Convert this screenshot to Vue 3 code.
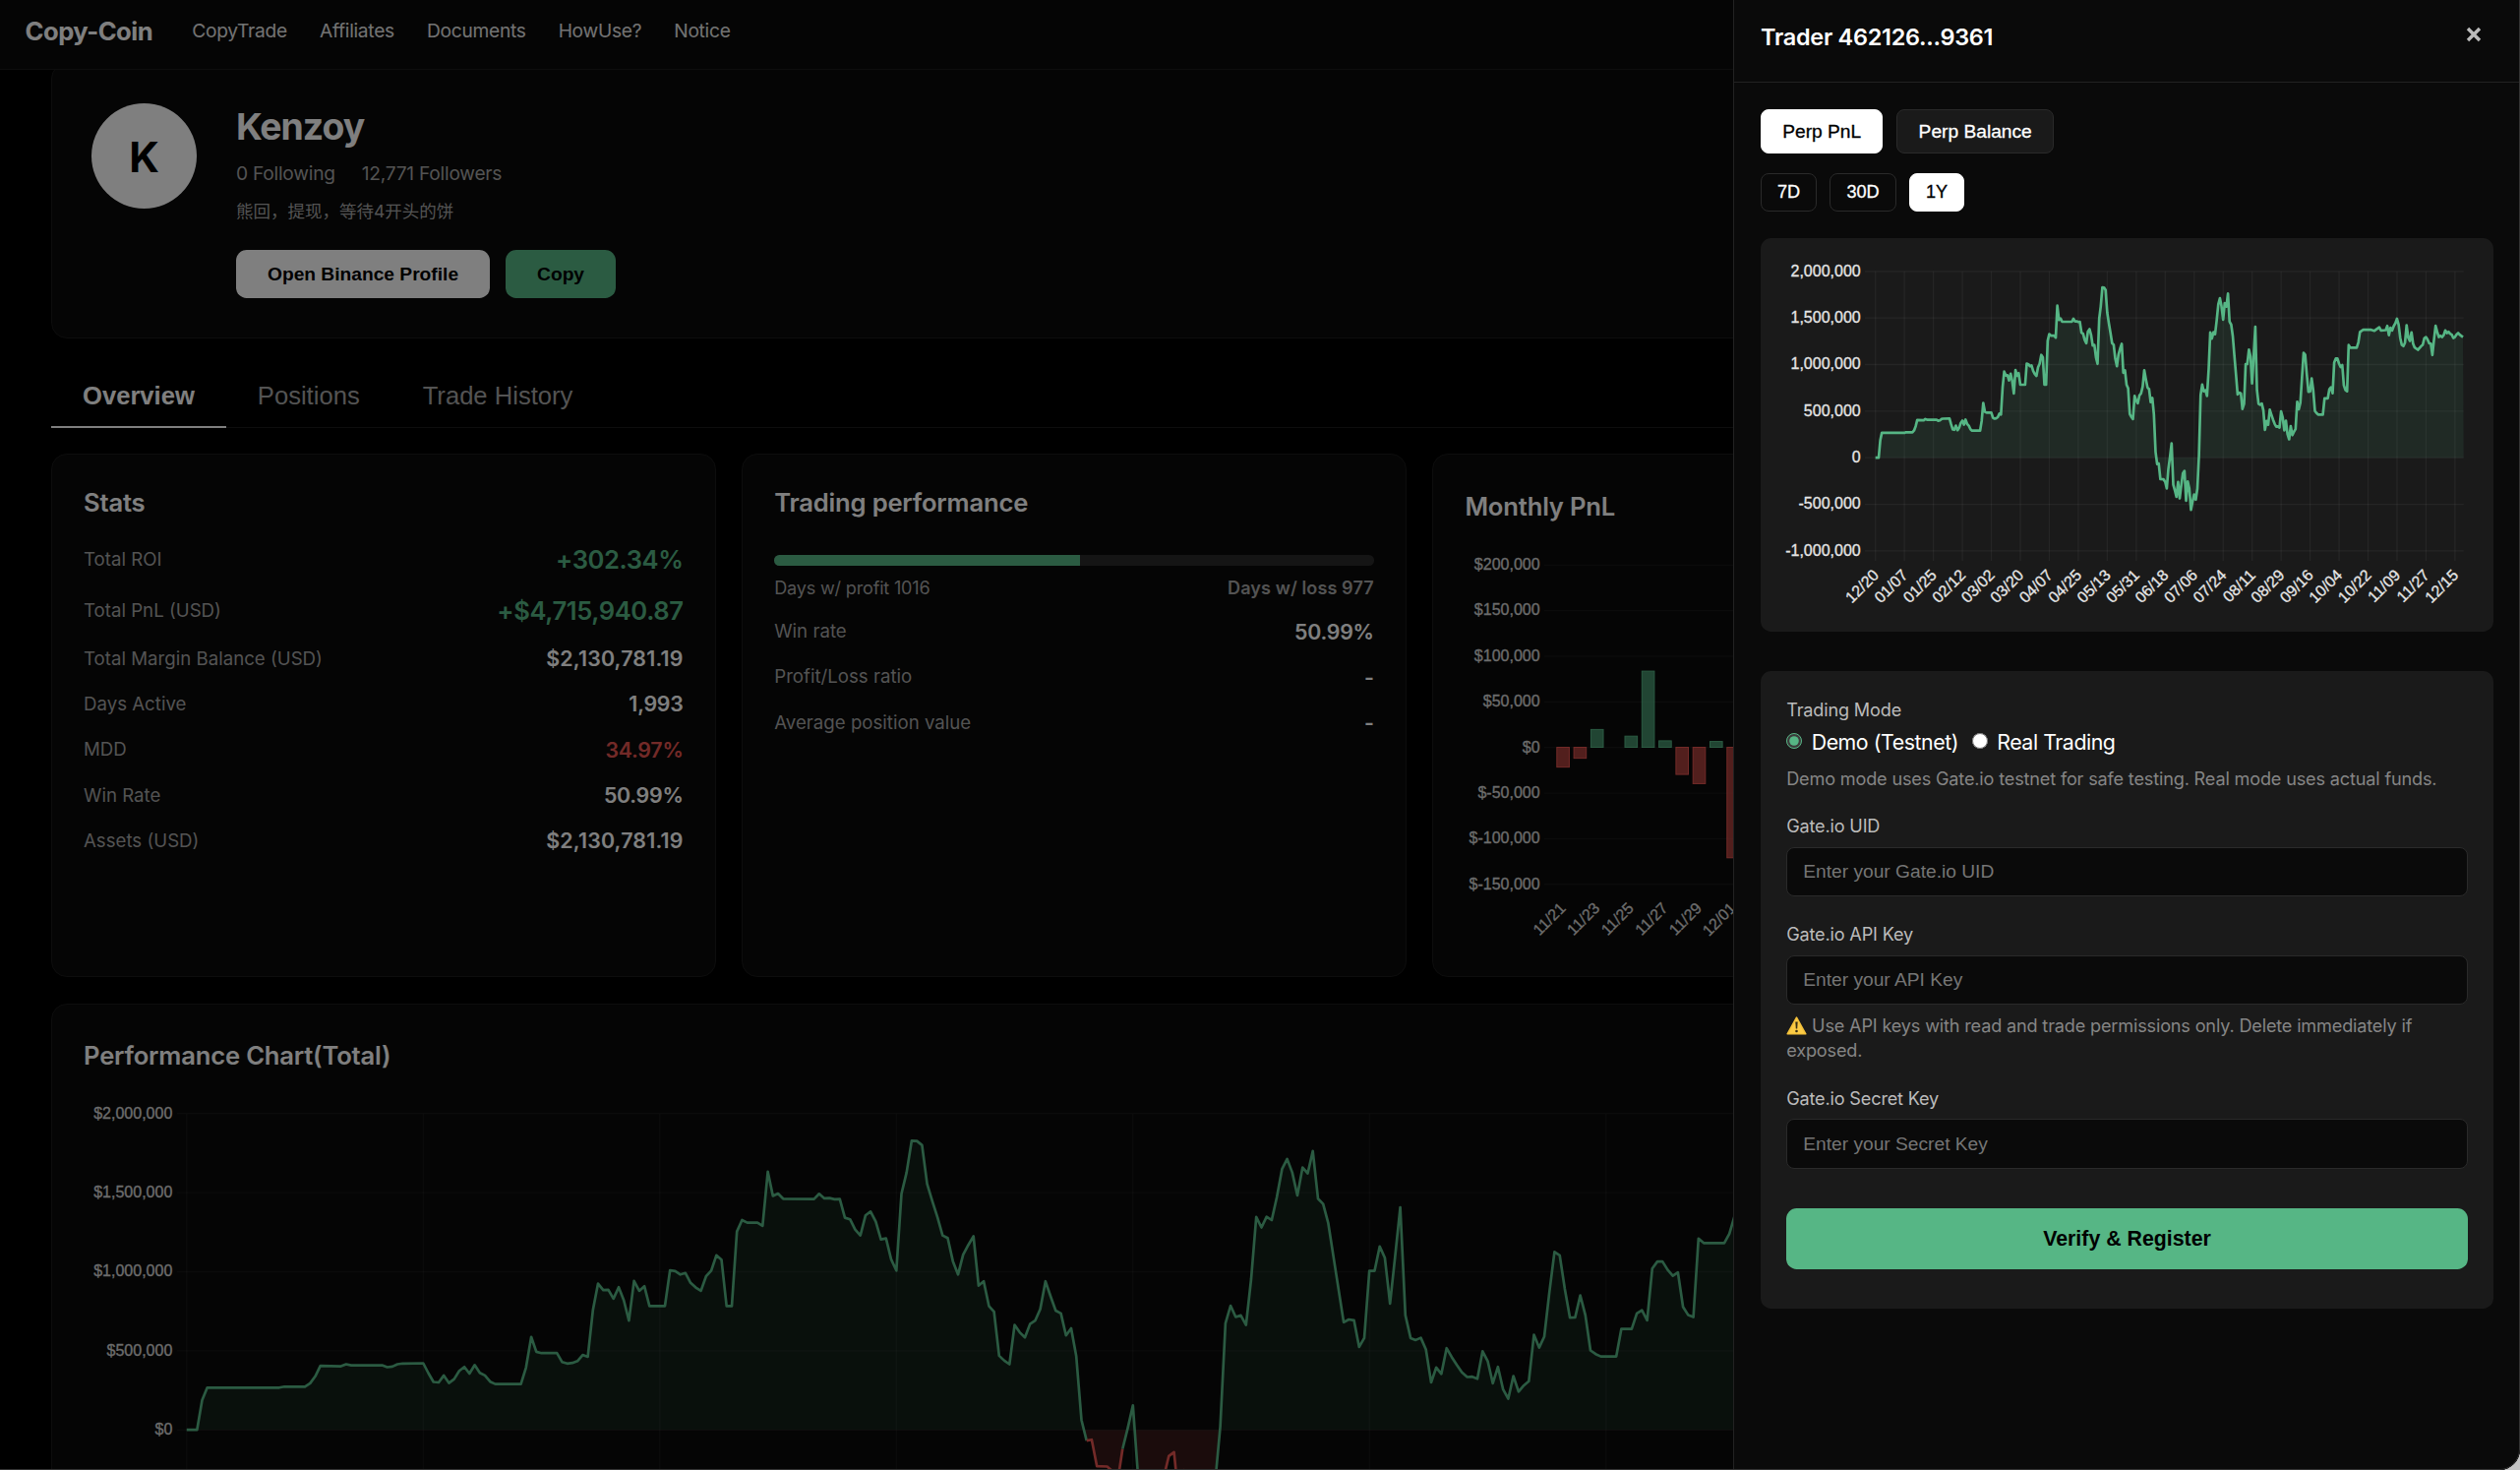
<script setup>
import { ref } from "vue"

const navItems = ["CopyTrade", "Affiliates", "Documents", "HowUse?", "Notice"]
const tabs = ["Overview", "Positions", "Trade History"]
const activeTab = ref("Overview")
const chartType = ref("Perp PnL")
const range = ref("1Y")
const mode = ref("demo")
const uid = ref("")
const apiKey = ref("")
const secretKey = ref("")

const stats = [
  { label: "Total ROI", value: "+302.34%", type: "big" },
  { label: "Total PnL (USD)", value: "+$4,715,940.87", type: "big" },
  { label: "Total Margin Balance (USD)", value: "$2,130,781.19", type: "money" },
  { label: "Days Active", value: "1,993" },
  { label: "MDD", value: "34.97%", type: "loss" },
  { label: "Win Rate", value: "50.99%" },
  { label: "Assets (USD)", value: "$2,130,781.19", type: "money" },
]

const profitDays = 1016
const lossDays = 977

// [day, pnl in thousands], days in between are flat
const pnl = [
  [0, 0], [2, 0], [3, 187], [4, 267], [18, 267], [19, 273], [23, 273], [24, 294], [25, 338], [26, 404],
  [30, 402], [31, 415], [32, 408], [38, 408], [39, 396], [40, 400], [41, 415], [42, 419], [46, 421], [47, 359],
  [48, 303], [49, 300], [50, 344], [51, 296], [52, 321], [53, 373], [54, 398], [55, 356], [56, 410], [57, 361],
  [58, 344], [59, 305], [60, 290], [65, 290], [66, 394], [67, 587], [68, 493], [69, 485], [72, 485], [73, 429],
  [74, 419], [75, 423], [76, 435], [77, 473], [78, 462], [79, 756], [80, 924], [81, 883], [82, 885], [83, 829],
  [84, 902], [85, 819], [86, 690], [87, 941], [88, 879], [89, 908], [90, 783], [93, 783], [94, 1009], [95, 1003],
  [96, 982], [97, 991], [98, 929], [99, 899], [100, 879], [101, 970], [102, 1007], [103, 1103], [104, 1076], [105, 783],
  [106, 783], [107, 1254], [108, 1326], [109, 1310], [111, 1310], [112, 1289], [113, 1631], [114, 1478], [115, 1494], [116, 1461],
  [122, 1459], [123, 1492], [124, 1463], [125, 1465], [126, 1457], [127, 1459], [128, 1341], [129, 1331], [130, 1266], [131, 1229],
  [132, 1355], [133, 1380], [134, 1316], [135, 1204], [136, 1210], [137, 1078], [138, 1007], [139, 1492], [140, 1627], [141, 1828],
  [142, 1826], [143, 1799], [144, 1554], [145, 1445], [146, 1343], [147, 1229], [148, 1212], [149, 1065], [150, 982], [151, 1107],
  [152, 1169], [153, 1223], [154, 912], [155, 939], [156, 783], [157, 746], [158, 468], [159, 437], [160, 415], [161, 663],
  [162, 616], [163, 584], [164, 669], [165, 690], [166, 763], [167, 939], [168, 844], [169, 754], [170, 736], [171, 597],
  [172, 642], [173, 466], [174, 62], [175, -68], [176, -62], [177, -230], [179, -232], [180, -260], [181, -331], [182, -120],
  [183, 10], [184, 155], [185, -290], [186, -350], [187, -420], [188, -260], [189, -436], [190, -300], [191, -166], [192, -141],
  [193, -460], [194, -255], [195, -330], [196, -560], [197, -470], [198, -395], [199, -450], [200, -330], [201, 20], [202, 674],
  [203, 785], [204, 713], [205, 723], [206, 663], [207, 953], [208, 1345], [209, 1279], [210, 1347], [211, 1326], [212, 1471],
  [213, 1648], [214, 1712], [215, 1627], [216, 1482], [217, 1658], [218, 1621], [219, 1762], [220, 1461], [221, 1428], [222, 1306],
  [223, 1098], [224, 887], [225, 680], [226, 698], [227, 692], [228, 524], [229, 580], [230, 1005], [231, 1005], [232, 1159],
  [233, 1088], [234, 798], [235, 1098], [236, 1407], [237, 725], [238, 580], [239, 568], [240, 582], [241, 508], [242, 300],
  [243, 394], [244, 354], [245, 516], [246, 460], [247, 410], [248, 363], [249, 334], [250, 336], [251, 323], [252, 497],
  [253, 435], [254, 294], [255, 398], [256, 255], [257, 197], [258, 340], [259, 242], [260, 280], [261, 307], [262, 601],
  [263, 520], [264, 589], [265, 870], [266, 1125], [267, 1103], [268, 891], [269, 709], [270, 711], [271, 850], [272, 725],
  [273, 502], [274, 479], [275, 464], [278, 464], [279, 638], [281, 638], [282, 736], [283, 756], [284, 692], [285, 1020],
  [286, 1064], [287, 1064], [288, 1011], [289, 974], [290, 995], [291, 777], [292, 725], [293, 713], [294, 1209], [295, 1181],
  [299, 1181], [300, 1240], [301, 1350], [303, 1373], [308, 1373], [310, 1362], [313, 1400], [314, 1366], [317, 1370], [318, 1415],
  [319, 1316], [320, 1395], [321, 1366], [322, 1415], [323, 1443], [324, 1492], [325, 1429], [326, 1288], [327, 1211], [328, 1197],
  [329, 1236], [330, 1422], [331, 1288], [332, 1253], [333, 1345], [334, 1225], [335, 1183], [337, 1158], [339, 1197], [340, 1211],
  [341, 1281], [342, 1295], [343, 1270], [344, 1228], [345, 1225], [346, 1102], [347, 1270], [348, 1415], [349, 1352], [350, 1295],
  [351, 1309], [352, 1295], [353, 1316], [354, 1366], [355, 1338], [356, 1352], [357, 1330], [358, 1320], [359, 1285], [360, 1295],
  [361, 1323], [362, 1338], [363, 1320], [365, 1295],
]

const line = (pts) => pts.map((p) => p[0].toFixed(1) + "," + p[1].toFixed(1)).join(" ")
const project = (x0, dx, y0, dy) => pnl.map(([d, v]) => [x0 + d * dx, y0 - v * dy])

// drawer chart
const small = { x0: 116.7, y0: 223.2, right: 714.7 }
const smallPts = project(small.x0, 1.6365, small.y0, 47.35 / 500)
const smallLine = line(smallPts)
const smallArea = small.x0 + "," + small.y0 + " " + smallLine + " " + small.right + "," + small.y0
const smallY = ["2,000,000", "1,500,000", "1,000,000", "500,000", "0", "-500,000", "-1,000,000"]
const smallX = [
  "12/20", "01/07", "01/25", "02/12", "03/02", "03/20", "04/07", "04/25", "05/13", "05/31", "06/18",
  "07/06", "07/24", "08/11", "08/29", "09/16", "10/04", "10/22", "11/09", "11/27", "12/15",
]

// performance chart
const big = { x0: 104.8, y0: 343.2, right: 2013 }
const bigPts = project(big.x0, 5.228, big.y0, 80.4 / 500)
const bigArea = big.x0 + "," + big.y0 + " " + line(bigPts) + " " + big.right + "," + big.y0
const bigY = ["$2,000,000", "$1,500,000", "$1,000,000", "$500,000", "$0"]
const isLoss = (i) => pnl[i][1] < 0 && pnl[i + 1][1] < 0
const bigRuns = []
for (let i = 0; i < bigPts.length - 1; i++) {
  const last = bigRuns[bigRuns.length - 1]
  if (last && last.loss === isLoss(i)) last.pts.push(bigPts[i + 1])
  else bigRuns.push({ loss: isLoss(i), pts: [bigPts[i], bigPts[i + 1]] })
}

// monthly chart
const monthly = [-21.7, -12, 19.5, 0, 12.2, 83.4, 7.1, -29.7, -39.8, 6.4, -121]
const monthlyBars = monthly
  .map((v, i) => ({ v, x: 93.8 + i * 17.3, y: v > 0 ? 219.5 - v * 0.928 : 219.5, h: Math.abs(v) * 0.928 }))
  .filter((b) => b.v !== 0)
const monthlyY = ["$200,000", "$150,000", "$100,000", "$50,000", "$0", "$-50,000", "$-100,000", "$-150,000"]
const monthlyX = ["11/21", "11/23", "11/25", "11/27", "11/29", "12/01"]
</script>

<template>
  <div class="app">
    <div class="page">
      <header class="header">
        <div class="logo">Copy-Coin</div>
        <nav class="nav">
          <a v-for="item in navItems" :key="item">{{ item }}</a>
        </nav>
      </header>

      <main class="content">
        <section class="profile">
          <div class="avatar">K</div>
          <div class="info">
            <h1>Kenzoy</h1>
            <div class="follow">
              <span>0 Following</span>
              <span>12,771 Followers</span>
            </div>
            <p class="bio">熊回，提现，等待4开头的饼</p>
            <div class="actions">
              <button class="btn white">Open Binance Profile</button>
              <button class="btn green">Copy</button>
            </div>
          </div>
        </section>

        <div class="tabs">
          <button
            v-for="tab in tabs"
            :key="tab"
            class="tab"
            :class="{ active: tab === activeTab }"
            @click="activeTab = tab"
          >{{ tab }}</button>
        </div>

        <div class="grid">
          <section class="card">
            <h2>Stats</h2>
            <div class="rows">
              <div v-for="s in stats" :key="s.label" class="row" :class="s.type">
                <span>{{ s.label }}</span>
                <strong>{{ s.value }}</strong>
              </div>
            </div>
          </section>

          <section class="card">
            <h2>Trading performance</h2>
            <div class="track">
              <div class="fill" :style="{ width: (profitDays / (profitDays + lossDays)) * 100 + '%' }"></div>
            </div>
            <div class="days">
              <span>Days w/ profit {{ profitDays }}</span>
              <b>Days w/ loss {{ lossDays }}</b>
            </div>
            <div class="row"><span>Win rate</span><strong>50.99%</strong></div>
            <div class="row"><span>Profit/Loss ratio</span><strong>-</strong></div>
            <div class="row"><span>Average position value</span><strong>-</strong></div>
          </section>

          <section class="card monthly">
            <h2>Monthly PnL</h2>
            <svg class="chart" width="609" height="420">
              <g v-for="(l, i) in monthlyY" :key="l">
                <line class="gridline" x1="81" x2="609" :y1="34.3 + i * 46.35" :y2="34.3 + i * 46.35" />
                <text x="76.6" :y="39.1 + i * 46.35" text-anchor="end">{{ l }}</text>
              </g>
              <rect
                v-for="b in monthlyBars"
                :key="b.x"
                :class="b.v > 0 ? 'bar-up' : 'bar-down'"
                :x="b.x"
                :y="b.y"
                width="12.6"
                :height="b.h"
              />
              <text
                v-for="(l, i) in monthlyX"
                :key="l"
                text-anchor="end"
                :transform="`translate(${103.7 + i * 34.6} 384) rotate(-45)`"
              >{{ l }}</text>
            </svg>
          </section>
        </div>

        <section class="card performance">
          <h2>Performance Chart(Total)</h2>
          <svg class="chart" width="2014" height="460">
            <defs>
              <clipPath id="above"><rect x="0" y="0" width="2014" :height="big.y0" /></clipPath>
              <clipPath id="below"><rect x="0" :y="big.y0" width="2014" height="200" /></clipPath>
            </defs>
            <g v-for="(l, i) in bigY" :key="l">
              <line class="gridline" x1="95" x2="2013" :y1="21.7 + i * 80.4" :y2="21.7 + i * 80.4" />
              <text x="90.3" :y="26.5 + i * 80.4" text-anchor="end">{{ l }}</text>
            </g>
            <line
              v-for="i in 8"
              :key="i"
              class="gridline"
              :x1="big.x0 + (i - 1) * 240.5"
              :x2="big.x0 + (i - 1) * 240.5"
              y1="21.7"
              y2="460"
            />
            <polygon class="area-up" :points="bigArea" clip-path="url(#above)" />
            <polygon class="area-down" :points="bigArea" clip-path="url(#below)" />
            <polyline
              v-for="(r, i) in bigRuns"
              :key="i"
              :class="r.loss ? 'line-down' : 'line-up'"
              :points="line(r.pts)"
            />
          </svg>
        </section>
      </main>
    </div>

    <div class="overlay"></div>

    <aside class="drawer">
      <div class="drawer-header">
        <h3>Trader 462126...9361</h3>
        <button class="close" aria-label="Close">
          <svg width="16" height="16" viewBox="0 0 16 16"><path d="M2 2 L14 14 M14 2 L2 14" /></svg>
        </button>
      </div>

      <div class="drawer-body">
        <div class="types">
          <button
            v-for="t in ['Perp PnL', 'Perp Balance']"
            :key="t"
            :class="{ active: t === chartType }"
            @click="chartType = t"
          >{{ t }}</button>
        </div>
        <div class="ranges">
          <button
            v-for="r in ['7D', '30D', '1Y']"
            :key="r"
            :class="{ active: r === range }"
            @click="range = r"
          >{{ r }}</button>
        </div>

        <div class="panel">
          <svg class="chart light" width="745" height="400">
            <g v-for="(l, i) in smallY" :key="l">
              <line class="gridline" x1="106" :x2="small.right" :y1="33.8 + i * 47.35" :y2="33.8 + i * 47.35" />
              <text x="101.7" :y="38.6 + i * 47.35" text-anchor="end">{{ l }}</text>
            </g>
            <g v-for="(l, i) in smallX" :key="l">
              <line class="gridline" :x1="small.x0 + i * 29.46" :x2="small.x0 + i * 29.46" y1="33.8" y2="328" />
              <text text-anchor="end" :transform="`translate(${121 + i * 29.46} 343.5) rotate(-45)`">{{ l }}</text>
            </g>
            <polygon class="area-up" :points="smallArea" />
            <polyline class="line-up" :points="smallLine" />
          </svg>
        </div>

        <form class="form" @submit.prevent>
          <div class="label">Trading Mode</div>
          <div class="radios">
            <label><input v-model="mode" type="radio" value="demo"><span>Demo (Testnet)</span></label>
            <label><input v-model="mode" type="radio" value="real"><span>Real Trading</span></label>
          </div>
          <p class="hint">Demo mode uses Gate.io testnet for safe testing. Real mode uses actual funds.</p>

          <div class="label uid">Gate.io UID</div>
          <input v-model="uid" class="field" placeholder="Enter your Gate.io UID">

          <div class="label api">Gate.io API Key</div>
          <input v-model="apiKey" class="field" placeholder="Enter your API Key">
          <p class="hint warn">
            <svg class="warn-icon" width="21" height="19" viewBox="0 0 21 19">
              <path d="M10.5 1.2 L19.8 17.8 H1.2 Z" fill="#fbcb45" stroke="#f3c03a" stroke-width="1.6" stroke-linejoin="round" />
              <path d="M9.3 5.6 h2.4 l-.5 7 h-1.4 z" fill="#3a2f14" />
              <circle cx="10.5" cy="15" r="1.3" fill="#3a2f14" />
            </svg>
            Use API keys with read and trade permissions only. Delete immediately if exposed.
          </p>

          <div class="label secret">Gate.io Secret Key</div>
          <input v-model="secretKey" class="field" placeholder="Enter your Secret Key">

          <button class="submit">Verify &amp; Register</button>
        </form>
      </div>
    </aside>
  </div>
</template>

<style>
body {
  margin: 0;
  background: #c4c4c4;
}
</style>

<style scoped>
* {
  box-sizing: border-box;
}

.app {
  position: relative;
  height: 1494px;
  overflow: hidden;
  background: #000;
  border-radius: 0 0 21px 0;
  color: #fff;
  font-family: Inter, "Noto Sans CJK SC", sans-serif;
}

/* window edge */
.app::after {
  content: "";
  position: absolute;
  inset: 0;
  z-index: 10;
  border: solid #333;
  border-width: 0 1px 1px 0;
  border-radius: 0 0 21px 0;
  pointer-events: none;
}

h1, h2, h3, p {
  margin: 0;
}

button, .field {
  font-family: "Liberation Sans", Arial, sans-serif;
}

.header {
  position: relative;
  z-index: 2;
  display: flex;
  align-items: center;
  gap: 40px;
  height: 71px;
  padding: 0 25.5px 8px;
  background: #0a0a0a;
  border-bottom: 1px solid #1a1a1a;
}

.logo {
  font-size: 25.6px;
  font-weight: 700;
  letter-spacing: -0.5px;
}

.nav {
  display: flex;
  gap: 33px;
  color: #e5e5e5;
  font-size: 19.2px;
  letter-spacing: -0.28px;
}

.content {
  width: 2080px;
  margin: -7px 0 0 52px;
}

.profile {
  display: flex;
  gap: 40px;
  height: 280px;
  padding: 40px;
  background: #0a0a0a;
  border: 1px solid #1a1a1a;
  border-radius: 16px;
}

.avatar {
  width: 107px;
  height: 107px;
  border-radius: 50%;
  background: #fff;
  color: #000;
  font-size: 42.67px;
  font-weight: 700;
  line-height: 110px;
  text-align: center;
}

h1 {
  font-size: 37.33px;
  line-height: 47px;
  letter-spacing: -1px;
}

.follow {
  display: flex;
  gap: 27px;
  margin-top: 13px;
  color: #a6a6a6;
  font-size: 19.2px;
  line-height: 22px;
  letter-spacing: -0.25px;
}

.bio {
  margin-top: 17px;
  color: #a6a6a6;
  font-size: 17.5px;
  line-height: 22px;
}

.actions {
  display: flex;
  gap: 16px;
  margin-top: 28px;
}

.btn {
  height: 49px;
  padding: 0 32px;
  border: none;
  border-radius: 10.67px;
  color: #000;
  font-size: 19.2px;
  font-weight: 700;
}

.btn.white {
  background: #fff;
}

.btn.green {
  background: #56b685;
}

.tabs {
  display: flex;
  height: 64px;
  margin-top: 27px;
  border-bottom: 1px solid #1a1a1a;
}

.tab {
  height: 64px;
  padding: 0 32px;
  background: none;
  border: none;
  border-bottom: 2px solid transparent;
  color: #a6a6a6;
  font-size: 25.6px;
}

.tab.active {
  color: #fff;
  font-weight: 700;
  border-bottom-color: #fff;
}

.grid {
  display: grid;
  grid-template-columns: repeat(3, 1fr);
  gap: 26.67px;
  height: 532px;
  margin-top: 26px;
}

.card {
  min-width: 0;
  padding: 32px;
  background: #0a0a0a;
  border: 1px solid #1a1a1a;
  border-radius: 16px;
}

h2 {
  font-size: 25.6px;
  font-weight: 600;
  line-height: 33px;
  letter-spacing: -0.18px;
}

.rows {
  margin-top: 16px;
}

.row {
  display: flex;
  align-items: center;
  justify-content: space-between;
  height: 46.3px;
}

.row span {
  color: #a6a6a6;
  font-size: 18.67px;
}

.row strong {
  font-size: 21.33px;
  font-weight: 600;
  letter-spacing: -0.25px;
}

.row.money strong {
  letter-spacing: 0.2px;
}

.row.big {
  height: 51.5px;
}

.row.big strong {
  color: #56b685;
  font-size: 25.6px;
  letter-spacing: -0.4px;
}

.row.loss strong {
  color: #e65550;
}

.track {
  height: 10.67px;
  margin-top: 37px;
  overflow: hidden;
  background: #2a2a2a;
  border-radius: 5.33px;
}

.fill {
  height: 100%;
  background: #56b685;
}

.days {
  display: flex;
  justify-content: space-between;
  margin: 10px 0 9.8px;
  color: #a6a6a6;
  font-size: 18.1px;
  line-height: 24px;
  letter-spacing: -0.2px;
}

.days b {
  font-weight: 600;
  letter-spacing: 0.08px;
}

.chart {
  display: block;
  font-family: "Liberation Sans", Arial, sans-serif;
  font-size: 16px;
}

.chart text {
  fill: #d8d8d8;
  stroke: #d8d8d8;
  stroke-width: 0.3;
}

.chart.light text {
  fill: #e6e6e6;
  stroke: #e6e6e6;
}

.gridline {
  stroke: rgba(255, 255, 255, 0.05);
  stroke-width: 1.33;
}

.bar-up {
  fill: rgba(86, 182, 133, 0.75);
  stroke: #56b685;
}

.bar-down {
  fill: rgba(230, 85, 80, 0.7);
  stroke: #e65550;
}

.line-up, .line-down {
  fill: none;
  stroke: #56b685;
  stroke-width: 2.67;
  stroke-linejoin: round;
}

.line-down {
  stroke: #e65550;
}

.area-up {
  fill: rgba(86, 182, 133, 0.13);
}

.light .area-up {
  fill: rgba(86, 182, 133, 0.1);
}

.area-down {
  fill: rgba(230, 85, 80, 0.2);
}

.monthly h2 {
  margin-top: 4px;
}

.monthly .chart {
  margin-top: 9px;
}

.performance {
  height: 600px;
  margin-top: 27px;
}

.performance h2 {
  margin-top: 2.5px;
}

.performance .chart {
  margin-top: 21.5px;
}

.overlay {
  position: absolute;
  inset: 0;
  z-index: 5;
  background: rgba(0, 0, 0, 0.5);
}

.drawer {
  position: absolute;
  top: 0;
  right: 0;
  bottom: 0;
  z-index: 6;
  width: 800px;
  background: #0a0a0a;
  border-left: 1px solid #222;
}

.drawer-header {
  display: flex;
  align-items: center;
  justify-content: space-between;
  height: 84px;
  padding: 0 39px 8px 27px;
  border-bottom: 1px solid #222;
}

h3 {
  font-size: 23.47px;
  font-weight: 600;
  letter-spacing: -0.27px;
}

.close {
  display: flex;
  padding: 0;
  margin-top: -5px;
  background: none;
  border: none;
}

.close path {
  fill: none;
  stroke: #bbb;
  stroke-width: 3.4;
}

.drawer-body {
  padding: 27px 27px 0;
}

.types, .ranges {
  display: flex;
  gap: 13.3px;
}

.types button, .ranges button {
  border: 1px solid #2a2a2a;
  border-radius: 8px;
  color: #fff;
  -webkit-text-stroke: 0.3px currentColor;
}

.types {
  gap: 14px;
}

.types button {
  height: 45px;
  padding: 0 21.2px;
  background: #1a1a1a;
  font-size: 19.2px;
}

.ranges {
  margin-top: 20px;
}

.ranges button {
  height: 39px;
  padding: 0 16px;
  background: #0a0a0a;
  font-size: 18.13px;
}

.types button.active, .ranges button.active {
  background: #fff;
  border-color: #fff;
  color: #000;
}

.panel, .form {
  background: #1a1a1a;
  border-radius: 10.67px;
}

.panel {
  height: 400px;
  margin-top: 27px;
}

.form {
  height: 648px;
  margin-top: 40px;
  padding: 26.5px 26.2px 0;
}

.label {
  color: #bbb;
  font-size: 18.13px;
  line-height: 24px;
  letter-spacing: -0.17px;
}

.radios {
  display: flex;
  gap: 13.7px;
  height: 26px;
  margin-top: 9px;
}

.radios label {
  display: flex;
  gap: 9.5px;
  font-size: 21.33px;
  line-height: 25px;
  letter-spacing: -0.45px;
}

.radios input {
  width: 16px;
  height: 16px;
  margin: 3px 0 0;
  accent-color: #56b685;
}

.hint {
  margin-top: 11px;
  color: #858585;
  font-size: 18.13px;
  line-height: 25.4px;
  letter-spacing: -0.17px;
}

.label.uid {
  margin-top: 23.5px;
}

.field {
  display: block;
  width: 100%;
  height: 50.67px;
  margin-top: 9.3px;
  padding: 0 16px;
  background: #0a0a0a;
  border: 1px solid #2a2a2a;
  border-radius: 8px;
  color: #fff;
  font-size: 19.2px;
}

.field::placeholder {
  color: #757575;
}

.label.api {
  margin-top: 26px;
}

.hint.warn {
  margin-top: 8.5px;
}

.warn-icon {
  vertical-align: -3px;
}

.label.secret {
  margin-top: 23.3px;
}

.submit {
  width: 100%;
  height: 62px;
  margin-top: 40.2px;
  background: #56b685;
  border: none;
  border-radius: 10.67px;
  color: #000;
  font-size: 21.33px;
  font-weight: 700;
}
</style>
